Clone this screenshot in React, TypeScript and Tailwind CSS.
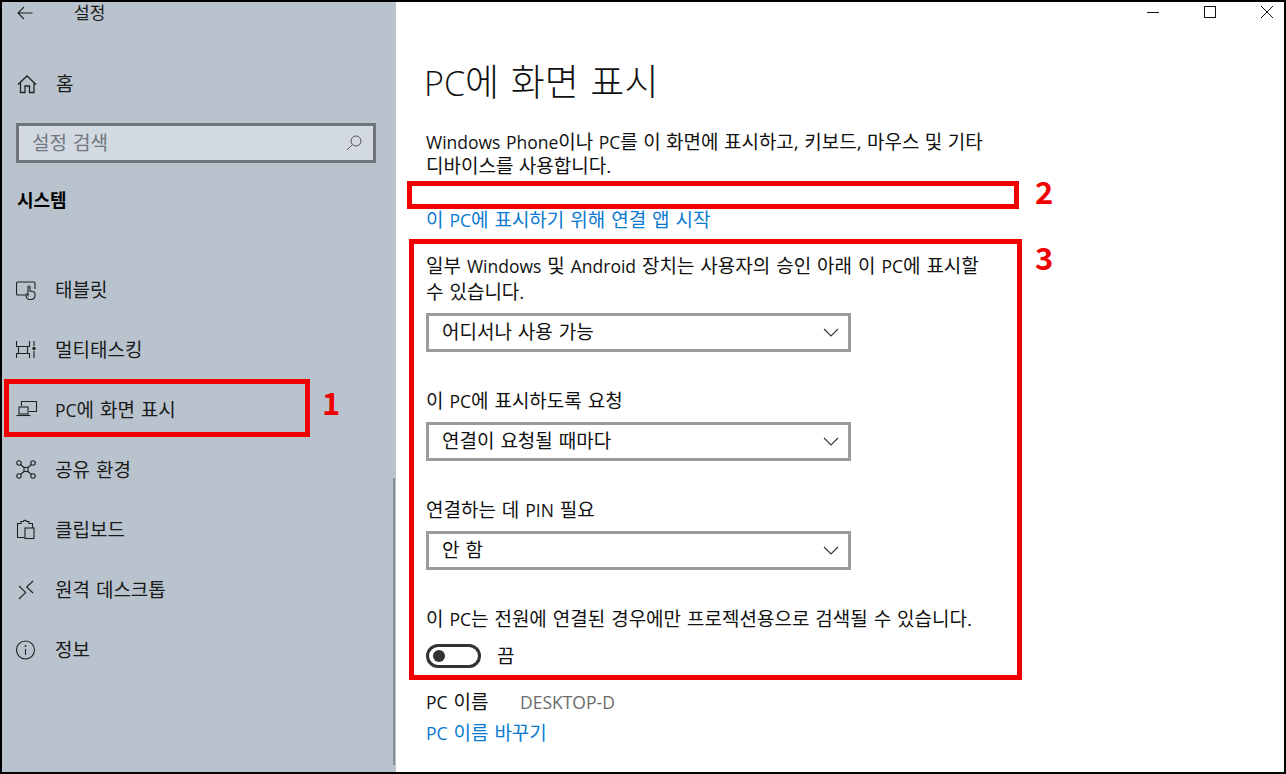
const font = "font-['Open_Sans','Noto_Sans_CJK_KR',sans-serif]";

// hangul runs wider than the latin in the shot, so latin words get a smaller size
function T({ children, latin = "text-[17.5px]" }: { children: string; latin?: string }) {
  return (
    <>
      {children.split(/([A-Za-z][A-Za-z-]*)/).map((part, i) =>
        i % 2 === 1 ? (
          <span key={i} className={latin}>
            {part}
          </span>
        ) : (
          part
        )
      )}
    </>
  );
}

const navItems = [
  {
    label: "태블릿",
    icon: (
      <>
        <path d="M9 17H1.500a1 1 0 0 1-1-1V5a1 1 0 0 1 1-1h16.500a1 1 0 0 1 1 1v6" />
        <path d="M13 21.500c-1.500-.5-3-2.500-3.200-4.500-.1-1 1-1.300 1.500-.6l.7 1V9a1 1 0 0 1 2 0v4l3.500.7c1 .2 1.500 1 1.500 2v1.800a4 4 0 0 1-3.500 4z" fill="#b8c3cd" />
      </>
    ),
  },
  {
    label: "멀티태스킹",
    icon: (
      <>
        <path d="M.500 3v5M13.500 3v5M.500 15v5M13.500 15v5" />
        <path d="M0 8.500h14M0 15.500h14M2.500 8.500v7M11.500 8.500v7" />
        <path d="M18 3v5M18 13v7" />
        <circle cx="18" cy="10.500" r="1.700" fill="#222" stroke="none" />
      </>
    ),
  },
  {
    label: "PC에 화면 표시",
    icon: (
      <>
        <path d="M5.500 8V3.500h15v10H13" />
        <rect x="3" y="9" width="9" height="7" />
        <path d="M.500 17.500h14" />
      </>
    ),
  },
  {
    label: "공유 환경",
    icon: (
      <>
        <circle cx="3" cy="5" r="2.200" />
        <circle cx="17" cy="5" r="2.200" />
        <circle cx="3" cy="18" r="2.200" />
        <circle cx="17" cy="18" r="2.200" />
        <rect x="8" y="9.500" width="4" height="4" />
        <path d="M4.500 6.500L8 9.500M15.500 6.500L12 9.500M4.500 16.500L8 13.500M15.500 16.500L12 13.500" />
      </>
    ),
  },
  {
    label: "클립보드",
    icon: (
      <>
        <path d="M8.500 19.500H1.500V5.500H5V3.500h2.200a2 2 0 0 1 3.600 0H13v2h3.500V10" />
        <rect x="9" y="10" width="9" height="10.500" />
      </>
    ),
  },
  {
    label: "원격 데스크톱",
    icon: (
      <>
        <path d="M3 8l6.700 6.500L3 21" />
        <path d="M17 3l-6.300 6 6.300 6" />
      </>
    ),
  },
  {
    label: "정보",
    icon: (
      <>
        <circle cx="9.500" cy="12" r="9" />
        <path d="M9.500 11v6" />
        <circle cx="9.500" cy="8" r="0.900" fill="#222" stroke="none" />
      </>
    ),
  },
];

function NavRow({ label, icon }: { label: string; icon: React.ReactNode }) {
  return (
    <div className="flex h-[60px] items-center pl-[14px] text-[19px] text-[#1a1a1a] [word-spacing:1px]">
      <div className="w-[39px]">
        <svg width="22" height="22" viewBox="0 0 22 22" fill="none" stroke="#222" strokeWidth="1.100" className="block">
          {icon}
        </svg>
      </div>
      <span className="mt-[2px]"><T>{label}</T></span>
    </div>
  );
}

function Dropdown({ value }: { value: string }) {
  return (
    <div className="flex h-[39px] w-[425px] items-center justify-between border-[3px] border-[#9b9b9b] bg-white pl-[13px] pr-[9px] text-[19px] text-[#111]">
      <span>{value}</span>
      <svg width="16" height="9" viewBox="0 0 16 9" fill="none" stroke="#333" strokeWidth="1.100">
        <path d="M1 1l7 7 7-7" />
      </svg>
    </div>
  );
}

function Callout({ n, className }: { n: string; className: string }) {
  return <div className={"absolute font-['Noto_Sans_CJK_KR',sans-serif] text-[31px] font-bold leading-none text-[#f00000] " + className}>{n}</div>;
}

export default function App() {
  return (
    <div className={"relative flex h-[774px] w-[1286px] overflow-hidden border-2 border-black bg-white " + font}>
      <aside className="relative w-[394px] shrink-0 bg-[#b8c3cd]">
        <div className="flex h-[22px] items-center pl-[15px] text-[17px] text-[#1a1a1a]">
          <svg width="16" height="14" viewBox="0 0 16 14" fill="none" stroke="#222" strokeWidth="1.100" className="mr-[41px]">
            <path d="M15.500 7H1M7 1L1 7l6 6" />
          </svg>
          <span>설정</span>
        </div>
        <div className="mt-[30px] flex h-[60px] items-center pl-[15px] text-[19px] text-[#1a1a1a]">
          <div className="w-[39px]">
            <svg width="21" height="20" viewBox="0 0 21 20" fill="none" stroke="#222" strokeWidth="1.300" className="block">
              <path d="M1 10.500L10 2l9 8.500M3.500 8.500V18.500h4.500V12h4.500v6.500H17V8.500" />
            </svg>
          </div>
          <span>홈</span>
        </div>
        <div className="ml-[14px] mt-[9px] flex h-[40px] w-[360px] items-center justify-between border-[3px] border-[#6f757b] bg-[#d3d9e1] pl-[13px] pr-[11px] text-[19px] text-[#6f7780] [word-spacing:1px]">
          <span>설정 검색</span>
          <svg width="16" height="16" viewBox="0 0 16 16" fill="none" stroke="#555" strokeWidth="1">
            <circle cx="10" cy="6" r="5" />
            <path d="M6.500 9.500L1 15" />
          </svg>
        </div>
        <div className="ml-[15px] mt-[17px] flex h-[40px] items-center text-[18px] font-bold text-black">시스템</div>
        <div className="mt-[39px]">
          {navItems.map((item) => (
            <NavRow key={item.label} label={item.label} icon={item.icon} />
          ))}
        </div>
        <div className="absolute bottom-[7px] right-[1px] h-[287px] w-[2px] bg-[#878d93]" />
      </aside>

      <main className="flex-1 bg-white text-[19px] text-[#111] [word-spacing:1px]">
        <div className="flex h-[20px] items-center justify-end gap-[45px] pr-[11px]">
          <svg width="12" height="12" viewBox="0 0 12 12" fill="none" stroke="#111" strokeWidth="1"><path d="M0 6.500h12" /></svg>
          <svg width="12" height="12" viewBox="0 0 12 12" fill="none" stroke="#111" strokeWidth="1"><rect x="0.500" y="0.500" width="11" height="11" /></svg>
          <svg width="12" height="12" viewBox="0 0 12 12" fill="none" stroke="#111" strokeWidth="1"><path d="M0 0l12 12M12 0L0 12" /></svg>
        </div>
        <h1 className="ml-[28px] mt-[37px] text-[37px] font-light leading-[46px] text-[#111] [word-spacing:2px]"><T latin="text-[34px]">PC에 화면 표시</T></h1>
        <div className="ml-[30px] mt-[24px] w-[570px]">
          <p className="leading-[24px] [word-spacing:0.5px]"><T>Windows Phone이나 PC를 이 화면에 표시하고, 키보드, 마우스 및 기타</T><br /><T>디바이스를 사용합니다.</T></p>
          <p className="mt-[30px] leading-[24px] text-[#0a7ad1]"><T>이 PC에 표시하기 위해 연결 앱 시작</T></p>
          <p className="mt-[21px] leading-[26px]"><T>일부 Windows 및 Android 장치는 사용자의 승인 아래 이 PC에 표시할</T><br />수 있습니다.</p>
          <div className="mt-[8px]"><Dropdown value="어디서나 사용 가능" /></div>
          <p className="mt-[37px] leading-[24px]"><T>이 PC에 표시하도록 요청</T></p>
          <div className="mt-[9px]"><Dropdown value="연결이 요청될 때마다" /></div>
          <p className="mt-[37px] leading-[24px]"><T>연결하는 데 PIN 필요</T></p>
          <div className="mt-[9px]"><Dropdown value="안 함" /></div>
          <p className="mt-[37px] whitespace-nowrap leading-[24px]"><T>이 PC는 전원에 연결된 경우에만 프로젝션용으로 검색될 수 있습니다.</T></p>
          <div className="mt-[13px] flex h-[24px] items-center">
            <div className="flex h-[24px] w-[55px] items-center rounded-full border-[3px] border-[#333] pl-[4px]">
              <div className="h-[12px] w-[12px] rounded-full bg-[#333]" />
            </div>
            <span className="ml-[16px]">끔</span>
          </div>
          <div className="mt-[22px] flex h-[24px] items-center">
            <span className="w-[94px]"><T>PC 이름</T></span>
            <span className="text-[17.5px] text-[#6b6b6b]">DESKTOP-D</span>
          </div>
          <p className="mt-[7px] leading-[24px] text-[#0a7ad1]"><T>PC 이름 바꾸기</T></p>
        </div>
      </main>

      <div className="absolute left-[2px] top-[377px] h-[58px] w-[306px] border-[5px] border-[#f00000]" />
      <div className="absolute left-[405px] top-[179px] h-[28px] w-[612px] border-[5px] border-[#f00000]" />
      <div className="absolute left-[407px] top-[237px] h-[441px] w-[613px] border-[5px] border-[#f00000]" />
      <Callout n="1" className="left-[320px] top-[384px]" />
      <Callout n="2" className="left-[1033px] top-[173px]" />
      <Callout n="3" className="left-[1033px] top-[239px]" />
    </div>
  );
}
